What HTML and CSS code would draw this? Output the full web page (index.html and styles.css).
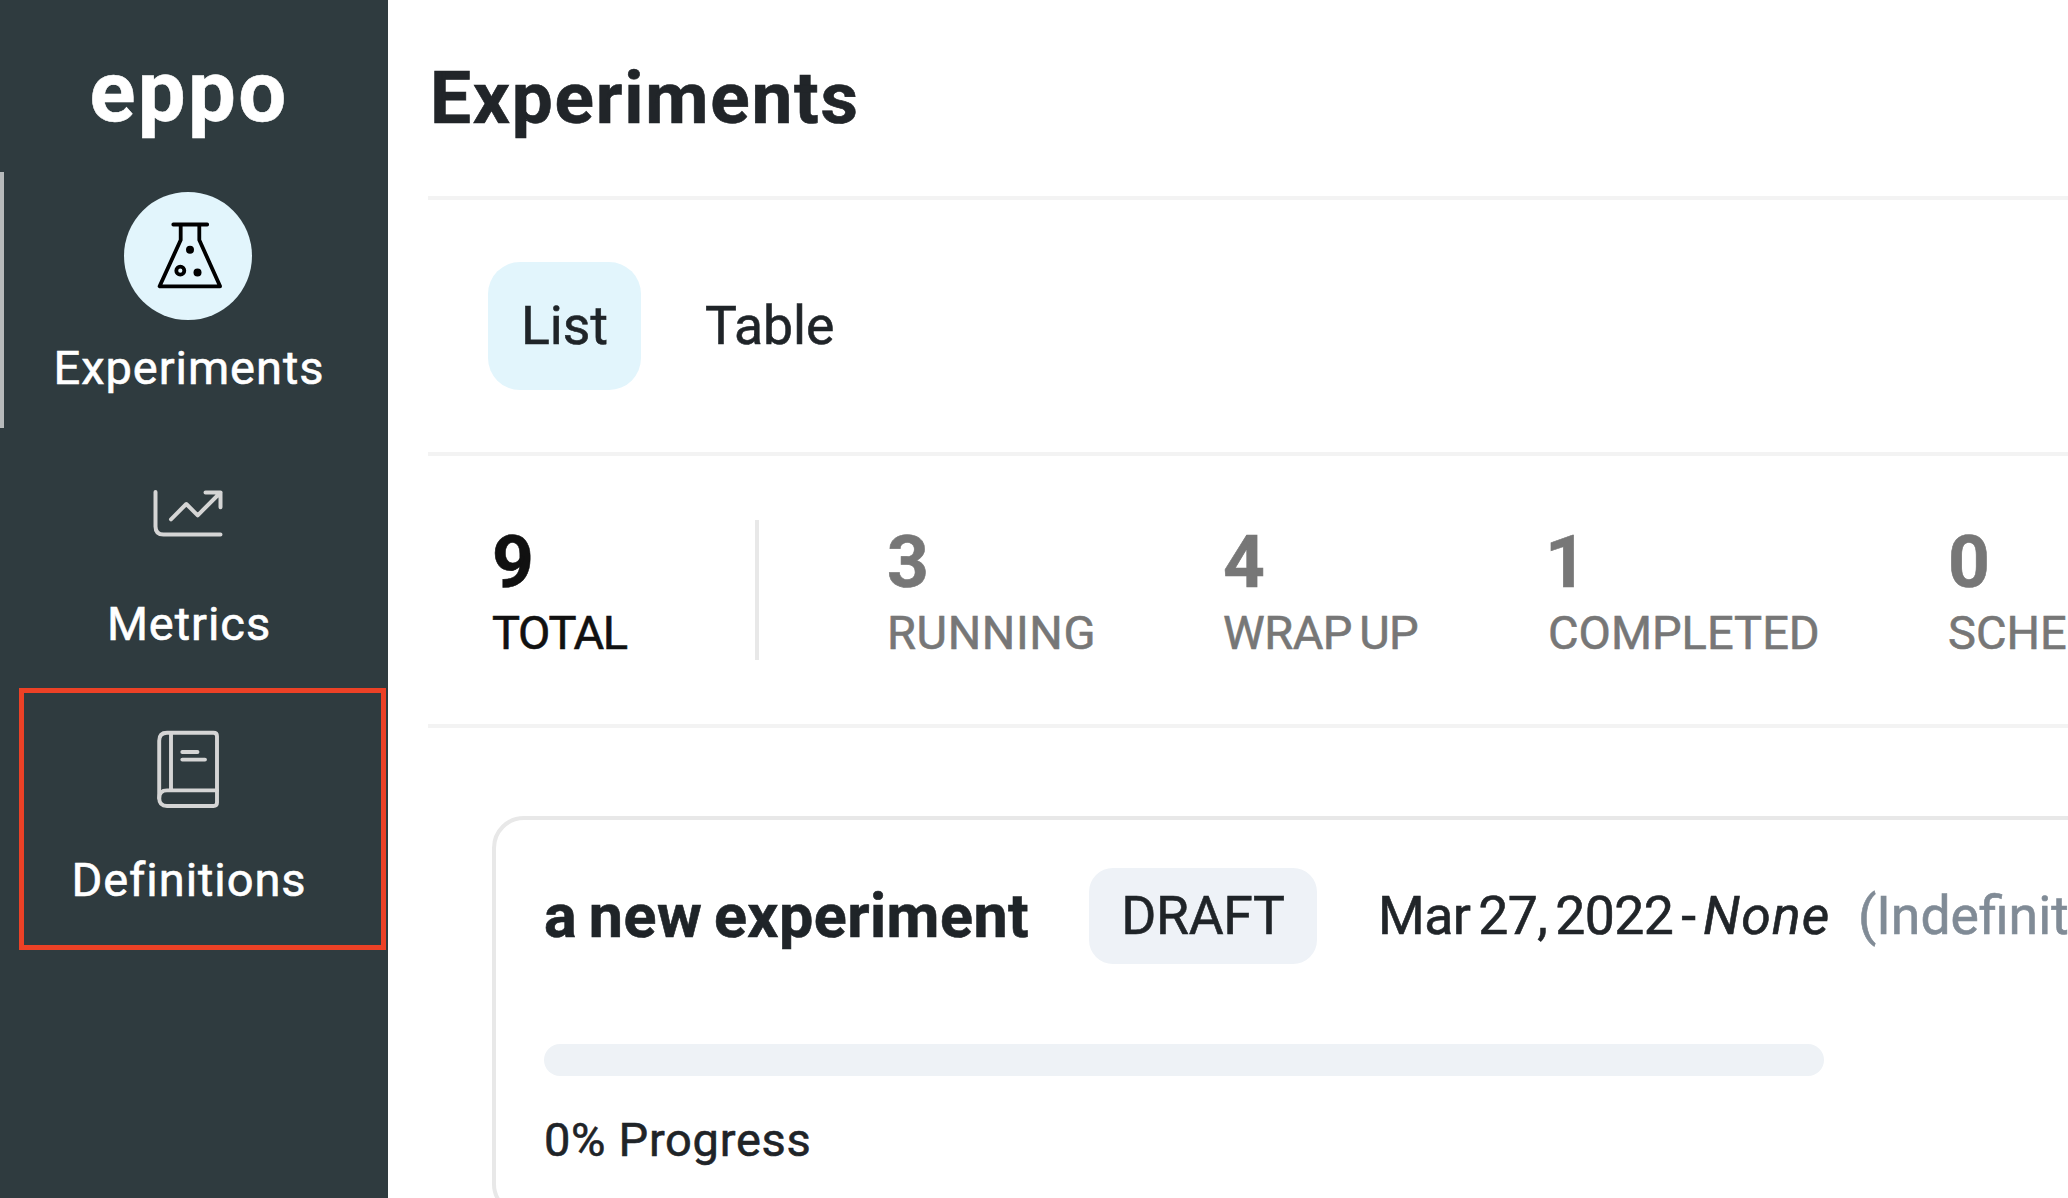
FILE: index.html
```html
<!DOCTYPE html>
<html lang="en">
<head>
<meta charset="utf-8">
<title>Experiments</title>
<link rel="stylesheet" href="styles.css">
</head>
<body>
<div class="app">
  <aside class="sidebar">
    <div class="logo">eppo</div>
    <nav class="nav">
      <a class="nav-item active">
        <svg class="nav-icon" viewBox="0 0 128 128" fill="none" stroke="#000" stroke-width="3.8" stroke-linecap="round" stroke-linejoin="round">
          <path d="M49.3 32.5H83.2M56.7 32.5V48L35.6 94.3H96.1L75.3 48V32.5"/>
          <circle cx="56.3" cy="78.7" r="4"/>
          <circle cx="66" cy="57.7" r="4" fill="#000" stroke="none"/>
          <circle cx="73.5" cy="80.5" r="4" fill="#000" stroke="none"/>
        </svg>
        <span class="nav-label">Experiments</span>
      </a>
      <a class="nav-item">
        <svg class="nav-icon" viewBox="0 0 128 128" fill="none" stroke="#d5d5d5" stroke-width="4" stroke-linecap="round" stroke-linejoin="round">
          <path d="M31.5 44V78.5Q31.5 86.5 39.5 86.5H96.5"/>
          <path d="M47 71.3L62.3 56L73.7 67.3L96.5 44.5M81.5 44.5H96.5V59.3"/>
        </svg>
        <span class="nav-label">Metrics</span>
      </a>
      <a class="nav-item">
        <svg class="nav-icon" viewBox="0 0 128 128" fill="none" stroke="#d5d5d5" stroke-width="3.9" stroke-linecap="round" stroke-linejoin="round">
          <path d="M43 28.7H89.5Q93 28.7 93 32.2V98.5Q93 102 89.5 102H43Q35.2 102 35.2 94V36.7Q35.2 28.7 43 28.7Z"/>
          <path d="M47 29V86M93 86.4H43Q35.2 86.4 35.2 94.2"/>
          <path d="M58.3 48H73.5M58.3 55.6H81"/>
        </svg>
        <span class="nav-label">Definitions</span>
      </a>
    </nav>
    <div class="highlight"></div>
  </aside>
  <main class="main">
    <header class="page-header"><h1>Experiments</h1></header>
    <div class="tabs">
      <a class="tab selected">List</a>
      <a class="tab">Table</a>
    </div>
    <section class="stats">
      <div class="stat total"><b>9</b><span>TOTAL</span></div>
      <div class="divider"></div>
      <div class="stat running"><b>3</b><span>RUNNING</span></div>
      <div class="stat wrap-up"><b>4</b><span>WRAP UP</span></div>
      <div class="stat completed"><b>1</b><span>COMPLETED</span></div>
      <div class="stat scheduled"><b>0</b><span>SCHEDULED</span></div>
    </section>
    <article class="card">
      <div class="card-head">
        <h2>a new experiment</h2>
        <span class="badge">DRAFT</span>
        <span class="date">Mar 27, 2022 -</span>
        <em>None</em>
        <span class="duration">(Indefinite)</span>
      </div>
      <div class="bar"></div>
      <div class="progress-label">0% Progress</div>
    </article>
  </main>
</div>
</body>
</html>
```
FILE: styles.css
```css
* { box-sizing: border-box; }
body {
  margin: 0;
  overflow: hidden;
  background: #fff;
  color: #1f2428;
  font-family: Roboto, "Liberation Sans", sans-serif;
  font-weight: 400;
  -webkit-text-stroke: 0.6px currentColor;
}
.app { display: flex; height: 1198px; overflow: hidden; }

.sidebar {
  position: relative;
  flex: none;
  width: 388px;
  padding-right: 12px;
  background: #2f3b3f;
  color: #fff;
}
.logo {
  padding-top: 12px;
  font-size: 85px;
  font-weight: 700;
  line-height: 160px;
  letter-spacing: 2.4px;
  text-indent: 2px;
  text-align: center;
}
.nav { display: flex; flex-direction: column; }
.nav-item {
  display: flex;
  flex-direction: column;
  align-items: center;
  height: 256px;
  padding-top: 20px;
}
.nav-item.active { box-shadow: inset 4px 0 #b7babb; }
.nav-icon { display: block; width: 128px; height: 128px; border-radius: 50%; }
.active .nav-icon { background: #e2f5fc; }
.nav-label {
  padding-left: 2px;
  font-size: 47px;
  line-height: 96px;
  letter-spacing: 0.95px;
}
.highlight {
  position: absolute;
  left: 19px;
  top: 688px;
  width: 367px;
  height: 262px;
  border: 5px solid #ec4126;
}

.main { flex: 1; min-width: 0; padding-left: 40px; overflow: hidden; }
.page-header { height: 200px; padding-left: 2px; border-bottom: 4px solid #f3f3f3; }
h1 {
  margin: 0;
  color: #212529;
  font-size: 73px;
  line-height: 197px;
  letter-spacing: 1.75px;
}
.tabs {
  display: flex;
  gap: 32px;
  height: 256px;
  padding: 62px 0 0 60px;
  border-bottom: 4px solid #f3f3f3;
}
.tab {
  height: 128px;
  padding: 0 32px;
  border-radius: 32px;
  font-size: 53.5px;
  line-height: 128px;
}
.tab.selected { width: 153px; padding-left: 33px; background: #e2f5fc; }

.stats {
  display: flex;
  gap: 128px;
  height: 272px;
  padding: 64px 0 0 64px;
  border-bottom: 4px solid #f3f3f3;
}
.divider { flex: none; width: 4px; height: 140px; background: #e8e8e8; }
.stat { display: flex; flex: none; flex-direction: column; color: #777; white-space: nowrap; }
.stat b { font-size: 73px; line-height: 85px; }
.stat span { font-size: 47px; line-height: 55px; }
.total { width: 135px; color: #111; letter-spacing: -1.3px; }
.running { width: 209px; letter-spacing: 0.6px; }
.wrap-up { width: 196px; letter-spacing: -0.5px; word-spacing: -4px; }
.wrap-up b { margin-left: -1px; }
.wrap-up span { margin-left: -1px; }
.completed { width: 272px; }
.completed b { margin-left: -3px; }

.card {
  width: 1800px;
  margin: 88px 0 0 64px;
  padding: 48px 48px 40px;
  border: 4px solid #e8e8e8;
  border-radius: 32px;
}
.card-head { display: flex; line-height: 96px; white-space: nowrap; font-size: 53.5px; }
h2 {
  flex: none;
  width: 545px;
  margin: 0;
  font-size: 61px;
  letter-spacing: 0.5px;
  word-spacing: -4px;
}
.badge {
  flex: none;
  width: 228px;
  margin-right: 61px;
  border-radius: 24px;
  background: #eef2f7;
  letter-spacing: -0.3px;
  text-align: center;
}
.date { flex: none; width: 325px; color: #212529; word-spacing: -5px; letter-spacing: -0.5px; }
em { flex: none; width: 155px; color: #212529; letter-spacing: 1.2px; }
.duration { color: #808b96; }
.bar { width: 1280px; height: 32px; margin-top: 80px; border-radius: 16px; background: #eef2f6; }
.progress-label { margin-top: 32px; font-size: 47px; line-height: 64px; letter-spacing: 0.7px; }
```
